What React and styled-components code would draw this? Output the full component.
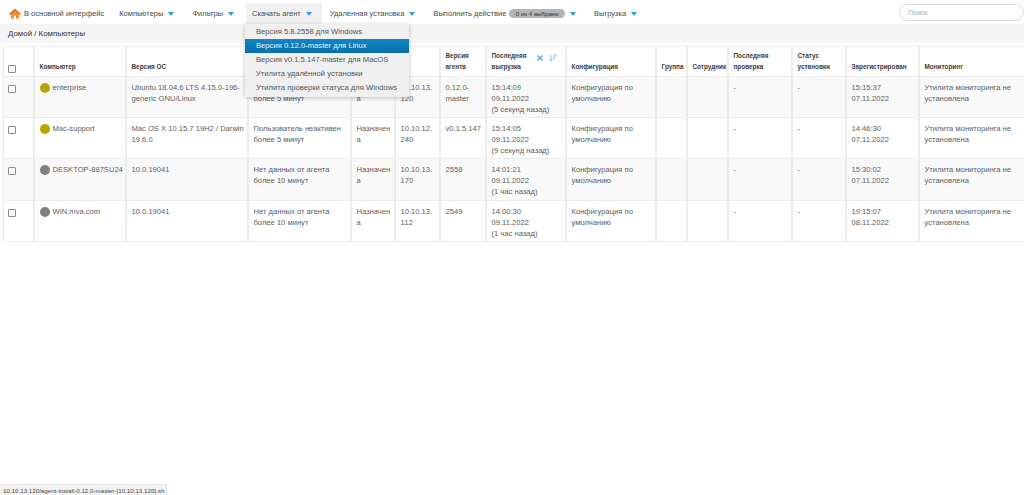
import React from "react";
import styled, { createGlobalStyle } from "styled-components";

const Global = createGlobalStyle`
  html, body { margin: 0; padding: 0; height: 100%; overflow: hidden; background: #fff; }
  body { font-family: "Liberation Sans", Arial, sans-serif; color: #555; }
`;

const Page = styled.div`
  position: relative;
  width: 1024px;
  height: 495px;
  overflow: hidden;
  background: #fff;
`;

const Toolbar = styled.nav`
  display: flex;
  align-items: flex-end;
  height: 24px;
  padding-left: 9px;
  box-sizing: border-box;
`;

const Item = styled.div`
  position: relative;
  display: flex;
  align-items: center;
  height: 21px;
  box-sizing: border-box;
  padding: 0 ${(p) => p.$right ?? 10}px 0 ${(p) => p.$left ?? 6}px;
  margin-right: ${(p) => p.$gap ?? 2}px;
  font-size: 7.5px;
  color: #4a4a4a;
  white-space: nowrap;
  background: ${(p) => (p.$active ? "#f1f1f1" : "transparent")};
`;

const Caret = styled.span`
  width: 0;
  height: 0;
  margin-left: 5px;
  border-left: 3.5px solid transparent;
  border-right: 3.5px solid transparent;
  border-top: 4px solid #2f9fdc;
`;

const HomeIcon = styled.svg`
  width: 12px;
  height: 11px;
  margin-right: 3px;
`;

const Badge = styled.span`
  margin-left: 3px;
  padding: 0 6.5px;
  height: 9px;
  line-height: 9px;
  border-radius: 5px;
  background: #b4b4b4;
  color: #333;
  font-size: 6.1px;
`;

const SearchBox = styled.div`
  margin: 0 0 3px auto;
  width: 125px;
  height: 17px;
  box-sizing: border-box;
  border: 1px solid #d8d8d8;
  border-radius: 9px;
  padding-left: 8px;
  font-size: 7px;
  line-height: 15px;
  color: #aaa;
  flex-shrink: 0;
`;

const Breadcrumb = styled.div`
  height: 19px;
  line-height: 19px;
  padding-left: 8px;
  background: #f5f5f5;
  font-size: 7.9px;
  color: #333;
`;

const Menu = styled.ul`
  position: absolute;
  left: 245px;
  top: 24px;
  width: 164px;
  margin: 0;
  padding: 1px 0 2px;
  list-style: none;
  background: rgba(240, 240, 240, 0.97);
  box-shadow: 0 1px 4px rgba(0, 0, 0, 0.25);
  border-radius: 0 0 2px 2px;
  z-index: 3;
`;

const MenuItem = styled.li`
  height: 14px;
  line-height: 14px;
  padding-left: 11px;
  font-size: 7.65px;
  white-space: nowrap;
  color: ${(p) => (p.$selected ? "#e8f4fb" : "#555")};
  background: ${(p) => (p.$selected ? "linear-gradient(#1186c6, #0a6ea8)" : "transparent")};
`;

const TableWrap = styled.div`
  margin: 3px 0 0 3px;
  width: 1030px;
`;

const Table = styled.table`
  border-collapse: collapse;
  table-layout: fixed;
  width: 1025px;
  font-size: 7.6px;
`;

const HeadRow = styled.tr`
  height: 30px;
`;

const Th = styled.th`
  border: 1px solid #ececec;
  border-width: 1px 2px 1px 1px;
  padding: 0 ${(p) => p.$reserve ?? 2}px 4px 5px;
  vertical-align: bottom;
  text-align: left;
  font-size: 6.4px;
  line-height: 11px;
  font-weight: bold;
  color: #3c3c3c;
  position: relative;
`;

const Row = styled.tr`
  height: 41.2px;
  background: ${(p) => (p.$odd ? "#f9f9f9" : "#fff")};
`;

const Td = styled.td`
  border: 1px solid #ececec;
  border-width: 1px 2px 1px 1px;
  padding: 5px 2px 0 5px;
  vertical-align: top;
  line-height: 11px;
  color: #5c5c5c;
  overflow-wrap: break-word;
`;

const CheckTh = styled(Th)`
  padding-left: 4px;
  padding-bottom: 3px;
`;

const CheckTd = styled(Td)`
  padding-left: 4px;
`;

const Check = styled.span`
  display: block;
  width: 6px;
  height: 6px;
  border: 1px solid #8d8d8d;
  border-radius: 1px;
  background: #fff;
`;

const RowCheck = styled(Check)`
  margin-top: 3px;
`;

const Name = styled.div`
  display: flex;
  align-items: flex-start;
  white-space: nowrap;
`;

const Dot = styled.span`
  flex: none;
  width: 10px;
  height: 10px;
  margin: 1px 3px 0 0;
  border-radius: 50%;
  background: ${(p) => p.$color};
`;

const SortIcons = styled.span`
  position: absolute;
  right: 8px;
  top: 7px;
  display: flex;
  gap: 5px;
  align-items: center;
`;

const Small = styled.svg`
  width: 8px;
  height: 8px;
  display: block;
`;

const Status = styled.div`
  position: absolute;
  left: 0;
  bottom: 0;
  width: 167px;
  height: 11px;
  line-height: 11px;
  box-sizing: border-box;
  padding-left: 3px;
  background: #f3f3f3;
  border-top: 1px solid #e4e4e4;
  border-right: 1px solid #e4e4e4;
  font-size: 6.2px;
  color: #444;
  white-space: nowrap;
`;

const widths = [30, 92, 122, 103, 44, 45, 46, 80, 90, 31, 41, 64, 54, 73, 110];
const heads = ["", "Компьютер", "Версия ОС", "", "", "", "Версия агента", "Последняя выгрузка", "Конфигурация", "Группа", "Сотрудник", "Последняя проверка", "Статус установки", "Зарегистрирован", "Мониторинг"];

const MON = "Утилита мониторинга не установлена";
const CONF = "Конфигурация по умолчанию";

const rows = [
  { color: "#b5a800", name: "enterprise", os: "Ubuntu 18.04.6 LTS 4.15.0-196-generic GNU/Linux", state: "Пользователь неактивен более 5 минут", assign: "Назначена", ip: ["10.10.13.", "120"], ver: "0.12.0-master", last: ["15:14:09", "09.11.2022", "(5 секунд назад)"], reg: ["15:15:37", "07.11.2022"] },
  { color: "#b5a800", name: "Mac-support", os: "Mac OS X 10.15.7 19H2 / Darwin 19.6.0", state: "Пользователь неактивен более 5 минут", assign: "Назначена", ip: ["10.10.12.", "240"], ver: "v0.1.5.147", last: ["15:14:05", "09.11.2022", "(9 секунд назад)"], reg: ["14:46:30", "07.11.2022"] },
  { color: "#808080", name: "DESKTOP-887SU24", os: "10.0.19041", state: "Нет данных от агента более 10 минут", assign: "Назначена", ip: ["10.10.13.", "170"], ver: "2558", last: ["14:01:21", "09.11.2022", "(1 час назад)"], reg: ["15:30:02", "07.11.2022"] },
  { color: "#808080", name: "WIN.mva.com", os: "10.0.19041", state: "Нет данных от агента более 10 минут", assign: "Назначена", ip: ["10.10.13.", "112"], ver: "2549", last: ["14:00:30", "09.11.2022", "(1 час назад)"], reg: ["19:15:07", "08.11.2022"] },
];

const Lines = ({ items }) => items.map((t) => <div key={t}>{t}</div>);

export default function App() {
  return (
    <Page>
      <Global />
      <Toolbar>
        <Item $left={0} $right={7} $gap={2}>
          <HomeIcon viewBox="0 0 24 22">
            <path d="M4 11v10h6v-6h4v6h6V11L12 4z" fill="#f0902f" />
            <path d="M0 12 12 1l12 11-2 2L12 5 2 14z" fill="#e8621c" />
          </HomeIcon>
          В основной интерфейс
        </Item>
        <Item>Компьютеры<Caret /></Item>
        <Item>Фильтры<Caret /></Item>
        <Item $active>Скачать агент<Caret /></Item>
        <Item>Удаленная установка<Caret /></Item>
        <Item>Выполнить действие<Badge>0 из 4 выбрано</Badge><Caret /></Item>
        <Item>Выгрузка<Caret /></Item>
        <SearchBox>Поиск</SearchBox>
      </Toolbar>
      <Breadcrumb>Домой / Компьютеры</Breadcrumb>
      <Menu>
        <MenuItem>Версия 5.8.2558 для Windows</MenuItem>
        <MenuItem $selected>Версия 0.12.0-master для Linux</MenuItem>
        <MenuItem>Версия v0.1.5.147-master для MacOS</MenuItem>
        <MenuItem>Утилита удалённой установки</MenuItem>
        <MenuItem>Утилита проверки статуса для Windows</MenuItem>
      </Menu>
      <TableWrap>
        <Table>
          <colgroup>
            {widths.map((w, i) => <col key={i} width={w} />)}
          </colgroup>
          <thead>
            <HeadRow>
              <CheckTh><Check /></CheckTh>
              {heads.slice(1).map((h, i) => (
                <Th key={i} $reserve={i === 6 ? 32 : 2}>
                  {h}
                  {i === 6 && (
                    <SortIcons>
                      <Small viewBox="0 0 8 8"><path d="M1.5 1.5l5 5M6.5 1.5l-5 5" stroke="#3fa9e0" strokeWidth="1.2" /></Small>
                      <Small viewBox="0 0 8 8"><path d="M2 1v6M.5 5.5 2 7l1.5-1.5M4 1h4M4 3h3M4 5h2" stroke="#7cc3ea" strokeWidth="1" fill="none" /></Small>
                    </SortIcons>
                  )}
                </Th>
              ))}
            </HeadRow>
          </thead>
          <tbody>
            {rows.map((r, i) => (
              <Row key={r.name} $odd={i % 2 === 0}>
                <CheckTd><RowCheck /></CheckTd>
                <Td><Name><Dot $color={r.color} />{r.name}</Name></Td>
                <Td>{r.os}</Td>
                <Td>{r.state}</Td>
                <Td>{r.assign}</Td>
                <Td>{r.ip[0]}<wbr />{r.ip[1]}</Td>
                <Td>{r.ver}</Td>
                <Td><Lines items={r.last} /></Td>
                <Td>{CONF}</Td>
                <Td />
                <Td />
                <Td>-</Td>
                <Td>-</Td>
                <Td><Lines items={r.reg} /></Td>
                <Td>{MON}</Td>
              </Row>
            ))}
          </tbody>
        </Table>
      </TableWrap>
      <Status>10.10.13.120/agent-install-0.12.0-master-[10.10.13.120].sh</Status>
    </Page>
  );
}
